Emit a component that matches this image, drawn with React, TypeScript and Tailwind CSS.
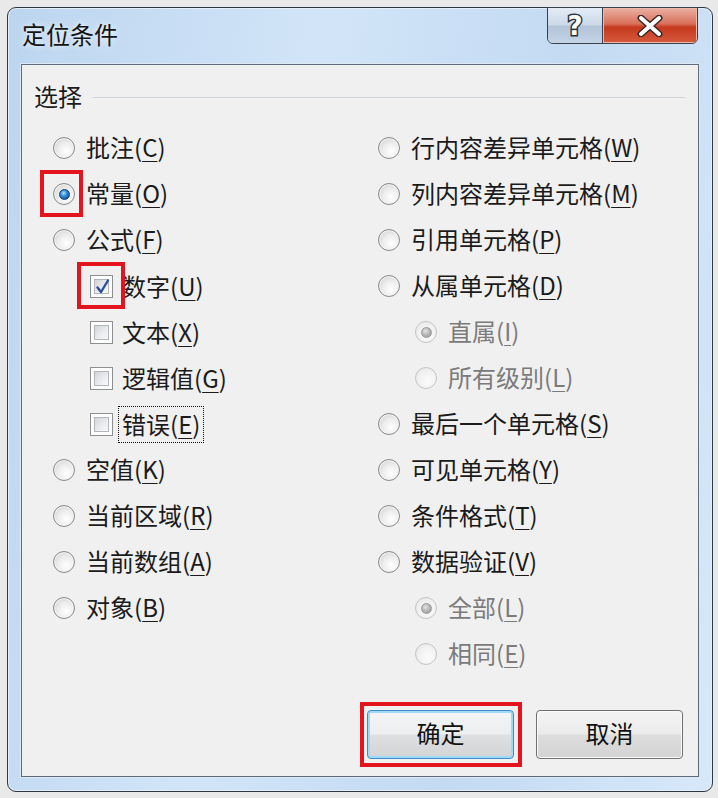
import React from "react";

type Opt = {
	label: string;
	key: string;
	kind: "radio" | "check";
	checked?: boolean;
	disabled?: boolean;
	sub?: boolean;
	mark?: boolean;
	focus?: boolean;
};

const left: Opt[] = [
	{ label: "批注", key: "C", kind: "radio" },
	{ label: "常量", key: "O", kind: "radio", checked: true, mark: true },
	{ label: "公式", key: "F", kind: "radio" },
	{ label: "数字", key: "U", kind: "check", checked: true, sub: true, mark: true },
	{ label: "文本", key: "X", kind: "check", sub: true },
	{ label: "逻辑值", key: "G", kind: "check", sub: true },
	{ label: "错误", key: "E", kind: "check", sub: true, focus: true },
	{ label: "空值", key: "K", kind: "radio" },
	{ label: "当前区域", key: "R", kind: "radio" },
	{ label: "当前数组", key: "A", kind: "radio" },
	{ label: "对象", key: "B", kind: "radio" },
];

const right: Opt[] = [
	{ label: "行内容差异单元格", key: "W", kind: "radio" },
	{ label: "列内容差异单元格", key: "M", kind: "radio" },
	{ label: "引用单元格", key: "P", kind: "radio" },
	{ label: "从属单元格", key: "D", kind: "radio" },
	{ label: "直属", key: "I", kind: "radio", sub: true, disabled: true, checked: true },
	{ label: "所有级别", key: "L", kind: "radio", sub: true, disabled: true },
	{ label: "最后一个单元格", key: "S", kind: "radio" },
	{ label: "可见单元格", key: "Y", kind: "radio" },
	{ label: "条件格式", key: "T", kind: "radio" },
	{ label: "数据验证", key: "V", kind: "radio" },
	{ label: "全部", key: "L", kind: "radio", sub: true, disabled: true, checked: true },
	{ label: "相同", key: "E", kind: "radio", sub: true, disabled: true },
];

const Radio = ({ checked, disabled, mark }: { checked?: boolean; disabled?: boolean; mark?: boolean }) => (
	<span
		className={
			disabled
				? "relative flex h-[22px] w-[22px] shrink-0 items-center justify-center rounded-full border border-[#c4c4c4] bg-[radial-gradient(circle_at_60%_65%,#fbfbfb_0%,#f2f2f2_50%,#e2e2e2_100%)]"
				: "relative flex h-[22px] w-[22px] shrink-0 items-center justify-center rounded-full border border-[#8a8a8a] bg-[radial-gradient(circle_at_62%_66%,#ffffff_0%,#ededed_45%,#c9c9c9_100%)] shadow-[inset_0_0_0_1px_#f6f6f6]"
		}>
		{checked && !disabled && (
			<span className="h-[11px] w-[11px] rounded-full border border-[#0e3e72] bg-[radial-gradient(circle_at_40%_35%,#b3e1ff_0%,#3189d6_40%,#0b3f7c_100%)]" />
		)}
		{checked && disabled && (
			<span className="h-[11px] w-[11px] rounded-full border border-[#9a9a9a] bg-[radial-gradient(circle_at_40%_35%,#e6e6e6_0%,#b4b4b4_50%,#9c9c9c_100%)]" />
		)}
		{mark && <span className="absolute -left-[14px] -top-[14px] h-[47px] w-[43px] border-4 border-[#e3141d]" />}
	</span>
);

const Check = ({ checked, mark }: { checked?: boolean; mark?: boolean }) => (
	<span className="relative flex h-[23px] w-[23px] shrink-0 border border-[#8e8f8f] bg-[#fdfdfd] p-[3px]">
		<span className="h-full w-full border border-[#b2b6bb] bg-[linear-gradient(135deg,#d2d5d9_0%,#e9ebee_55%,#fafafa_100%)]" />
		{checked && (
			<svg className="absolute left-[3px] top-[2px]" width="17" height="17" viewBox="0 0 17 17">
				<path d="M3.5 9.5 L7 14 L14 2.5" fill="none" stroke="#2c4c9c" strokeWidth="2.4" strokeLinecap="round" strokeLinejoin="round" />
			</svg>
		)}
		{mark && <span className="absolute -left-[14px] -top-[14px] h-[47px] w-[48px] border-4 border-[#e3141d]" />}
	</span>
);

const Row = ({ o }: { o: Opt }) => (
	<div className={o.sub ? "flex h-[46px] items-center pl-[37px]" : "flex h-[46px] items-center"}>
		{o.kind === "radio" ? (
			<Radio checked={o.checked} disabled={o.disabled} mark={o.mark} />
		) : (
			<Check checked={o.checked} mark={o.mark} />
		)}
		{o.kind === "check" ? (
			<span
				className={
					o.focus
						? "ml-[5px] border border-dotted border-[#111] px-[3px] pb-[4px] pt-[2px] leading-[29px] text-[#1b1b1b]"
						: "ml-[5px] border border-transparent px-[3px] pb-[4px] pt-[2px] leading-[29px] text-[#1b1b1b]"
				}>
				{o.label}(<span className="underline decoration-1 underline-offset-[4px]">{o.key}</span>)
			</span>
		) : (
			<span className={o.disabled ? "ml-[11px] pb-[3px] leading-[29px] text-[#7b7b7b]" : "ml-[11px] pb-[3px] leading-[29px] text-[#1b1b1b]"}>
				{o.label}(<span className="underline decoration-1 underline-offset-[4px]">{o.key}</span>)
			</span>
		)}
	</div>
);

export default function App() {
	return (
		<div className="h-[798px] w-[718px] overflow-hidden bg-[#e9e9e9] pl-[7px] pt-[7px] font-['Noto_Sans_CJK_SC',sans-serif] text-[24px]">
			<div className="relative flex h-[785px] w-[706px] flex-col rounded-[9px] border border-[#2e3844] bg-[linear-gradient(100deg,#bcd5ef_0%,#d2e5f8_38%,#c3daf2_68%,#d7e8f9_100%)] px-[13px] pb-[14px] shadow-[inset_0_0_0_1px_#e4eefa]">
				<div className="flex h-[56px] items-center pb-[4px] pl-[1px]">
					<span className="leading-none text-[#141414] [text-shadow:0_0_6px_#ffffff]">定位条件</span>
				</div>

				<div className="absolute -top-px right-[14px] flex h-[37px] overflow-hidden rounded-b-[6px] border border-[#38424e]">
					<div className="flex w-[55px] items-center justify-center border-r border-[#38424e] bg-[linear-gradient(to_bottom,#e3ecf6_0%,#ccd9e8_48%,#b2c4d9_52%,#c4d4e6_100%)]">
						<svg width="22" height="28" viewBox="0 0 22 28">
							<text x="11" y="23" textAnchor="middle" fontSize="26" fontWeight="700" fontFamily="DejaVu Sans, sans-serif" fill="#ffffff" stroke="#2b3340" strokeWidth="3" paintOrder="stroke">
								?
							</text>
						</svg>
					</div>
					<div className="flex w-[94px] items-center justify-center bg-[linear-gradient(to_bottom,#eab0a3_0%,#d9705a_45%,#c6391e_55%,#d65a3d_100%)] shadow-[inset_0_0_0_1px_#f0b8aa]">
						<svg width="26" height="22" viewBox="0 0 26 22">
							<path d="M4 3 L22 19 M22 3 L4 19" stroke="#3a2a2a" strokeWidth="7" strokeLinecap="round" />
							<path d="M4 3 L22 19 M22 3 L4 19" stroke="#ffffff" strokeWidth="4" strokeLinecap="round" />
						</svg>
					</div>
				</div>

				<div className="flex flex-1 flex-col border border-[#5d6b7b] bg-[#f0f0f0] shadow-[0_0_0_1px_#dbe8f6]">
					<div className="mt-[20px] flex h-[24px] items-center pl-[12px] pr-[13px]">
						<span className="pb-[3px] leading-none text-[#1b1b1b]">选择</span>
						<span className="ml-[11px] h-px flex-1 bg-[#cfd4d9]" />
					</div>

					<div className="mt-[16px] grid grid-cols-[325px_1fr] pl-[31px]">
						<div className="flex flex-col">
							{left.map((o, i) => (
								<Row key={`l-${i}`} o={o} />
							))}
						</div>
						<div className="flex flex-col">
							{right.map((o, i) => (
								<Row key={`r-${i}`} o={o} />
							))}
						</div>
					</div>

					<div className="mt-[33px] flex justify-end gap-[22px] pr-[15px]">
						<div className="relative">
							<button className="flex h-[49px] w-[147px] items-center justify-center rounded-[4px] border border-[#3c8ccb] bg-[linear-gradient(to_bottom,#f4f5f6_0%,#eceeef_48%,#dddfe1_52%,#d2d4d6_100%)] pb-[3px] text-[#111] shadow-[inset_0_0_0_2px_#9fd9f6]">
								确定
							</button>
							<span className="absolute -left-[7px] -top-[8px] h-[65px] w-[162px] border-4 border-[#e3141d]" />
						</div>
						<button className="flex h-[49px] w-[147px] items-center justify-center rounded-[4px] border border-[#707070] bg-[linear-gradient(to_bottom,#f4f4f4_0%,#ebebeb_48%,#dddddd_52%,#d3d3d3_100%)] pb-[3px] text-[#111] shadow-[inset_0_0_0_1px_#fbfbfb]">
							取消
						</button>
					</div>
				</div>
			</div>
		</div>
	);
}
